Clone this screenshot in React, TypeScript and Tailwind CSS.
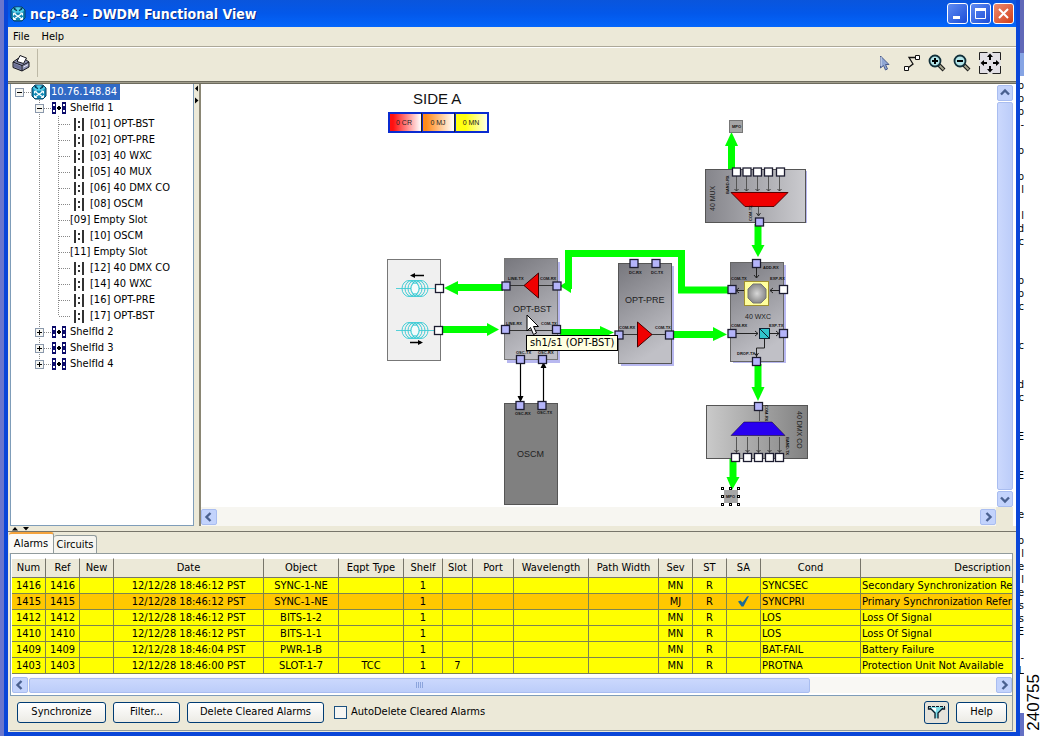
import React from "react";

/* ---------- icons ---------- */

function RouterIcon() {
  return (
    <svg width="16" height="16" viewBox="0 0 16 16" className="shrink-0" aria-hidden="true">
      <path d="M1 4 L4 1 H12 L15 4 V12 L12 15 H4 L1 12 Z" fill="#1489b4" stroke="#0a3f60" strokeWidth="1" />
      <ellipse cx="8" cy="4" rx="6" ry="2.8" fill="#4ccdea" />
      <path d="M4 3 l3 1.6 M12 3 l-3 1.6 M5.5 2.4 h-2 M10.5 2.4 h2" stroke="#063a58" strokeWidth="1.2" />
      <path d="M4 7.5 L12 13 M12 7.5 L4 13" stroke="#fff" strokeWidth="1.2" />
      <path d="M3.5 9.5 v-2.4 h2.4 M12.5 9.5 v-2.4 h-2.4 M3.5 11.2 v2.3 h2.4 M12.5 11.2 v2.3 h-2.4" stroke="#fff" fill="none" />
    </svg>
  );
}

function ShelfIcon() {
  return (
    <svg width="14" height="12" viewBox="0 0 14 12" className="shrink-0" aria-hidden="true">
      <rect x="0" y="0" width="4" height="12" fill="#0c0c6c" />
      <rect x="10" y="0" width="4" height="12" fill="#0c0c6c" />
      <path d="M1 2h2v2H1zM1 8h2v2H1zM11 2h2v2h-2zM11 8h2v2h-2z" fill="#fff" />
      <path d="M5 6h4M7 4v4" stroke="#000" strokeWidth="2" />
    </svg>
  );
}

function CardIcon() {
  return (
    <svg width="11" height="13" viewBox="0 0 11 13" className="shrink-0" aria-hidden="true">
      <path d="M2 0v13M10 0v13" stroke="#333" strokeWidth="2" />
      <path d="M5 3h2v2H5zM5 8h2v2H5z" fill="#333" />
    </svg>
  );
}

function PrinterIcon() {
  return (
    <svg width="18" height="18" viewBox="0 0 18 18" aria-hidden="true">
      <path d="M1 8 L6 4.5 H12 L17 8 V13 L10 17 L1 13.5 Z" fill="#8f93b4" stroke="#16161e" />
      <path d="M1 8 L10 11.5 L17 8 M10 11.5 V17" stroke="#16161e" fill="none" />
      <path d="M5 7.5 L8 1.5 L14.5 4 L11.5 9.5 Z" fill="#fff" stroke="#16161e" />
      <path d="M2 9.5 L9 12.5 V15.5 L2 12.8 Z" fill="#6a6e94" />
      <path d="M11.5 13 l4.5 -2.3" stroke="#e8e8f4" />
    </svg>
  );
}

function Magnifier({ plus }: { plus?: boolean }) {
  return (
    <svg width="18" height="18" viewBox="0 0 18 18" aria-hidden="true">
      <path d="M11 11 L16 16" stroke="#1a1a1a" strokeWidth="4" />
      <path d="M11.5 11.5 L15.5 15.5" stroke="#a8a890" strokeWidth="1.8" />
      <circle cx="7" cy="7" r="5.5" fill="#b4e6ea" stroke="#12303a" strokeWidth="1.8" />
      <path d={plus ? "M4 7h6M7 4v6" : "M4 7h6"} stroke="#000" strokeWidth="2" />
    </svg>
  );
}

function Chevron({ dir }: { dir: "up" | "down" | "left" | "right" }) {
  const paths = {
    up: "M1 6.5 L5 2.5 L9 6.5",
    down: "M1 3.5 L5 7.5 L9 3.5",
    left: "M6.5 1 L2.5 5 L6.5 9",
    right: "M3.5 1 L7.5 5 L3.5 9",
  };
  return (
    <svg width="10" height="10" viewBox="0 0 10 10" aria-hidden="true">
      <path d={paths[dir]} fill="none" stroke="#4a6190" strokeWidth="2.4" />
    </svg>
  );
}

function ScrollButton({ dir }: { dir: "up" | "down" | "left" | "right" }) {
  return (
    <button
      aria-label={`Scroll ${dir}`}
      className="flex size-4 shrink-0 items-center justify-center rounded-xs border border-[#a9bdf0] bg-[#c3d3fc]"
    >
      <Chevron dir={dir} />
    </button>
  );
}

/* ---------- title bar, menu, toolbar ---------- */

function TitleBar() {
  const btn = "flex size-[21px] items-center justify-center rounded-[3px] border border-white";
  return (
    <header className="flex h-[27px] shrink-0 items-center gap-1 bg-linear-to-b from-[#0a55dc] via-[#0358ea] to-[#0466fb] pr-[2px] pl-[2px]">
      <RouterIcon />
      <h1 className="flex-1 font-['DejaVu_Sans_Condensed',sans-serif] text-[14px] leading-5 font-bold text-white [text-shadow:1px_1px_#0a2a80]">
        ncp-84 - DWDM Functional View
      </h1>
      <div className="flex gap-[2px]">
        <button aria-label="Minimize" className={`${btn} bg-linear-to-br from-[#5f8bf2] to-[#1c4bd6]`}>
          <svg width="13" height="13" aria-hidden="true"><path d="M2 9h7v3H2z" fill="#fff" /></svg>
        </button>
        <button aria-label="Maximize" className={`${btn} bg-linear-to-br from-[#5f8bf2] to-[#1c4bd6]`}>
          <svg width="13" height="13" aria-hidden="true"><path d="M1.5 2h10v9.5h-10z" fill="none" stroke="#fff" /><path d="M1 1h11v3H1z" fill="#fff" /></svg>
        </button>
        <button aria-label="Close" className={`${btn} bg-linear-to-br from-[#ee8a6c] to-[#d03c12]`}>
          <svg width="13" height="13" aria-hidden="true"><path d="M2 2l9 9M11 2l-9 9" stroke="#fff" strokeWidth="2" /></svg>
        </button>
      </div>
    </header>
  );
}

function Toolbar() {
  return (
    <div className="flex h-[34px] shrink-0 items-center border-t border-white pr-[14px] pb-[3px] pl-1">
      <button aria-label="Print" className="size-[18px]"><PrinterIcon /></button>
      <div className="ml-[7px] h-7 w-px bg-[#bdb9a6]" />
      <div className="flex-1" />
      <div className="flex items-center gap-[7px]">
        <button aria-label="Select" className="mr-[2px] size-[18px]">
          <svg width="18" height="18" viewBox="0 0 18 18" aria-hidden="true">
            <path d="M4.500 2 V14 L7.500 11.500 L9.500 16 L11.500 15 L9.500 10.500 L13 10.500 Z" fill="#8fa6d4" stroke="#4a5c8c" />
            <path d="M5 3v9" stroke="#d8e2f6" />
          </svg>
        </button>
        <button aria-label="Connect" className="size-[18px]">
          <svg width="18" height="18" viewBox="0 0 18 18" aria-hidden="true">
            <path d="M1.500 12.500h4v4h-4zM12.500 1.500h4v4h-4z" fill="#fff" stroke="#111" />
            <path d="M12 3.500 H6 L10 10 L5.500 13.500" fill="none" stroke="#111" strokeWidth="1.300" />
          </svg>
        </button>
        <button aria-label="Zoom in" className="size-[18px]"><Magnifier plus /></button>
        <button aria-label="Zoom out" className="size-[18px]"><Magnifier /></button>
        <button aria-label="Fit to window" className="size-6">
          <svg width="24" height="24" viewBox="0 0 24 24" aria-hidden="true">
            <path d="M1.500 1.500h21v21h-21z" fill="#e2e0e6" />
            <path d="M1.500 9v-7.500h8M14.500 1.500h8V9M22.500 15v7.500h-8M9.500 22.500h-8V15" fill="none" stroke="#222" />
            <path d="M12 5v4M12 15v4M5 12h4M15 12h4" stroke="#000" strokeWidth="2" />
            <path d="M12 2.500l3 3.500h-6zM12 21.500l3-3.500h-6zM2.500 12l3.500-3v6zM21.500 12l-3.500-3v6z" fill="#000" />
          </svg>
        </button>
      </div>
    </div>
  );
}

/* ---------- navigation tree ---------- */

function Expander({ x, open }: { x: number; open?: boolean }) {
  return (
    <g>
      <rect x={x + 0.5} y="4.5" width="8" height="8" fill="#f6f6f2" stroke="#8a98ac" />
      <path d={open ? `M${x + 2} 8.5h5` : `M${x + 2} 8.5h5M${x + 4.5} 6v5`} stroke="#000" />
    </g>
  );
}

const dots = { stroke: "#888", strokeDasharray: "1 1" };

const slots = [
  "[01] OPT-BST", "[02] OPT-PRE", "[03] 40 WXC", "[05] 40 MUX", "[06] 40 DMX CO", "[08] OSCM",
  "[09] Empty Slot", "[10] OSCM", "[11] Empty Slot", "[12] 40 DMX CO", "[14] 40 WXC",
  "[16] OPT-PRE", "[17] OPT-BST",
];

function ShelfRow({ id, open, last }: { id: number; open?: boolean; last?: boolean }) {
  return (
    <div className="flex h-4 items-center">
      <svg width="41" height="16" className="shrink-0" aria-hidden="true">
        <path d={last ? "M28.500 0v8" : "M28.500 0v16"} {...dots} />
        <path d="M33 8.500h7" {...dots} />
        <Expander x={24} open={open} />
      </svg>
      <ShelfIcon />
      <span className="pl-1">ShelfId {id}</span>
    </div>
  );
}

function Tree() {
  return (
    <nav className="w-[184px] shrink-0 overflow-hidden border-r border-b border-l border-[#7f9db9] bg-white leading-4 whitespace-nowrap">
      <div className="flex h-4 items-center">
        <svg width="20" height="16" className="shrink-0" aria-hidden="true">
          <path d="M13 8.500h7" {...dots} />
          <Expander x={4} open />
        </svg>
        <RouterIcon />
        <span className="ml-[3px] bg-[#316ac5] pr-[3px] pl-px text-white">10.76.148.84</span>
      </div>
      <ShelfRow id={1} open />
      {slots.map((slot, i) => {
        const empty = slot.includes("Empty");
        return (
          <div key={slot} className="flex h-4 items-center">
            <svg width={empty ? 59 : 62} height="16" className="shrink-0" aria-hidden="true">
              <path d="M28.500 0v16" {...dots} />
              <path d={i === slots.length - 1 ? "M47.500 0v8" : "M47.500 0v16"} {...dots} />
              <path d="M48 8.500h11" {...dots} />
            </svg>
            {!empty && <CardIcon />}
            <span className={empty ? "" : "pl-[6px]"}>{slot}</span>
          </div>
        );
      })}
      <ShelfRow id={2} />
      <ShelfRow id={3} />
      <ShelfRow id={4} last />
    </nav>
  );
}

/* ---------- functional diagram ---------- */

function Port({ x, y, free }: { x: number; y: number; free?: boolean }) {
  return <rect x={x - 4} y={y - 4} width="8" height="8" fill={free ? "#fff" : "#b4b4fa"} stroke="#1c1c30" strokeWidth="1.3" />;
}

function Arrow({ points, head }: { points: string; head: string }) {
  return (
    <g>
      <polyline points={points} fill="none" stroke="#00ff00" strokeWidth="7" />
      <polygon points={head} fill="#00ff00" />
    </g>
  );
}

function Tiny({ x, y, children, rotate }: { x: number; y: number; children: string; rotate?: number }) {
  return (
    <text x={x} y={y} fontSize="4" fontWeight="bold" fill="#111" transform={rotate ? `rotate(${rotate} ${x} ${y})` : undefined}>
      {children}
    </text>
  );
}

function Fiber({ y }: { y: number }) {
  return (
    <g fill="none" stroke="#2fc8d2" strokeWidth="0.9">
      <path d={`M396 ${y}h40`} strokeWidth="0.8" />
      {[409, 412, 415, 418, 421].map((cx) => (
        <ellipse key={cx} cx={cx} cy={y} rx="7" ry="8" />
      ))}
      <ellipse cx="415" cy={y} rx="4" ry="5.500" fill="#f4fbfb" />
    </g>
  );
}

function Diagram() {
  return (
    <svg
      width="795"
      height="423"
      viewBox="201 84 795 423"
      className="block font-['Liberation_Sans',sans-serif]"
      role="img"
      aria-label="Side A functional view"
    >
      <defs>
        <linearGradient id="card" x1="0" y1="0" x2="0.35" y2="1">
          <stop offset="0" stopColor="#77777d" />
          <stop offset="1" stopColor="#c0c0c6" />
        </linearGradient>
        <linearGradient id="mux" x1="0" y1="0" x2="1" y2="0">
          <stop offset="0" stopColor="#85858b" />
          <stop offset="1" stopColor="#cbcbcf" />
        </linearGradient>
        <linearGradient id="dmx" x1="0" y1="0" x2="1" y2="0">
          <stop offset="0" stopColor="#cacaca" />
          <stop offset="1" stopColor="#818181" />
        </linearGradient>
        <linearGradient id="cr"><stop offset="0.1" stopColor="#ff1010" /><stop offset="1" stopColor="#fff" /></linearGradient>
        <linearGradient id="mj"><stop offset="0.1" stopColor="#ff8a1a" /><stop offset="1" stopColor="#fff" /></linearGradient>
        <linearGradient id="mn"><stop offset="0.3" stopColor="#ffff10" /><stop offset="1" stopColor="#ffffe8" /></linearGradient>
        <radialGradient id="lens"><stop offset="0" stopColor="#d8d8d8" /><stop offset="1" stopColor="#8b8b8b" /></radialGradient>
      </defs>

      <text x="413" y="104" fontSize="15" fill="#111">SIDE A</text>
      <rect x="388" y="112" width="101" height="21" fill="#0a2bd0" />
      <g fontSize="7" fill="#222" textAnchor="middle">
        <rect x="390" y="114" width="31" height="17" fill="url(#cr)" />
        <rect x="423" y="114" width="31" height="17" fill="url(#mj)" />
        <rect x="456" y="114" width="31" height="17" fill="url(#mn)" />
        <path d="M421.500 113v19M454.500 113v19" stroke="#222" />
        <text x="404" y="125">0 CR</text>
        <text x="438" y="125">0 MJ</text>
        <text x="471" y="125">0 MN</text>
      </g>

      {/* fibre span */}
      <rect x="387.500" y="259.500" width="53" height="101" fill="#f0f0f0" stroke="#777" />
      <Fiber y={288.5} />
      <Fiber y={330.5} />
      <path d="M413 275.500h11M410 342.500h11" stroke="#000" strokeWidth="1.500" />
      <path d="M410 275.500l5-2.500v5zM423 342.500l-5-2.500v5z" fill="#000" />
      <Arrow points="503,287.500 457,287.500" head="444,288 458,281 458,295" />
      <Arrow points="442,329.500 488,329.500" head="499,329.500 487,323 487,336" />
      <Port x={439.5} y={288.5} free />
      <Port x={438.5} y={330.5} free />

      {/* green paths between cards */}
      <Arrow points="730,290 681.500,290 681.500,253.500 568.500,253.500 568.500,289" head="560,286 571,279 571,293" />
      <Arrow points="559,332.500 601,332.500" head="614,332.500 600,326 600,339" />
      <Arrow points="672,334.500 714,334.500" head="727,334.500 713,327 713,341" />
      <Arrow points="731.500,169 731.500,145" head="731.500,132 725,146 738,146" />
      <Arrow points="758,224 758,246" head="758,257 751.500,245 764.500,245" />
      <Arrow points="758,364 758,388" head="758,401 751.500,387 764.500,387" />
      <Arrow points="733,459 733,478" head="732,490 726.500,477 739.500,477" />

      {/* booster */}
      <rect x="507" y="262" width="53" height="101" fill="#b8b8f0" />
      <rect x="504.500" y="258.500" width="53" height="101" fill="url(#card)" stroke="#777" />
      <path d="M510 285.500h44M510 330.500h44" stroke="#333" />
      <polygon points="524,285.500 538.500,273 538.500,298" fill="#f00000" stroke="#400" />
      <text x="513" y="312" fontSize="9" fill="#222">OPT-BST</text>
      <Tiny x={508} y={280}>LINE-TX</Tiny>
      <Tiny x={540} y={280}>COM-RX</Tiny>
      <Tiny x={506} y={325}>LINE-RX</Tiny>
      <Tiny x={541} y={325}>COM-TX</Tiny>
      <Tiny x={516} y={354}>OSC-TX</Tiny>
      <Tiny x={538} y={354}>OSC-RX</Tiny>
      <Port x={506} y={286} />
      <Port x={557} y={286} />
      <Port x={505.500} y={329.500} />
      <Port x={556.500} y={329.500} />
      <path d="M520.500 362v38M543.500 366v36" stroke="#000" strokeWidth="1.200" />
      <path d="M520.500 402l-3-6h6zM543.500 362l-3 6h6z" fill="#000" />
      <Port x={520.500} y={359.500} />
      <Port x={542.500} y={359.500} />

      {/* supervisory channel module */}
      <rect x="504.500" y="403.500" width="53" height="101" fill="#808080" stroke="#555" />
      <text x="517" y="457" fontSize="9" fill="#222">OSCM</text>
      <Tiny x={515} y={415}>OSC-RX</Tiny>
      <Tiny x={537} y={414}>OSC-TX</Tiny>
      <Port x={520} y={405.500} />
      <Port x={542} y={405.500} />

      {/* preamplifier */}
      <rect x="621" y="266" width="53" height="100" fill="#b8b8f0" />
      <rect x="618.500" y="263.500" width="53" height="100" fill="url(#card)" stroke="#555" />
      <path d="M623 334.500h44" stroke="#333" />
      <polygon points="637.500,322 637.500,347 652,334.500" fill="#f00000" stroke="#400" />
      <text x="625" y="303" fontSize="9" fill="#222">OPT-PRE</text>
      <Tiny x={629} y={274}>DC-RX</Tiny>
      <Tiny x={651} y={274}>DC-TX</Tiny>
      <Tiny x={619} y={329}>COM-RX</Tiny>
      <Tiny x={655} y={329}>COM-TX</Tiny>
      <Port x={634} y={263.500} />
      <Port x={656} y={263.500} />
      <Port x={619} y={335} />
      <Port x={669.500} y={335} />

      {/* wavelength cross-connect */}
      <rect x="733" y="265" width="53" height="98" fill="#b8b8f0" />
      <rect x="730.500" y="262.500" width="53" height="99" fill="url(#card)" stroke="#666" />
      <rect x="744.500" y="281.500" width="24" height="24" fill="#ffff9c" stroke="#a09030" />
      <polygon points="753,284 761,284 766,289 766,298 761,303 753,303 748,298 748,289" fill="url(#lens)" stroke="#777" />
      <path d="M756.500 268v10M754 275l2.500 3 2.500-3M744 290.500h-8M739 288l-3 2.500 3 2.500M779 290.500h-9M773 288l-3 2.500 3 2.500M736 333.500h22M755 331l3 2.500-3 2.500M770 333.500h9M776 331l3 2.500-3 2.500M764.500 338v10h-8v9M754.500 353l2 3 2-3" fill="none" stroke="#222" />
      <rect x="759.500" y="328.500" width="10" height="10" fill="#30c4cc" stroke="#123" />
      <path d="M760 329l9 9" stroke="#123" />
      <text x="745" y="319" fontSize="7" fill="#222">40 WXC</text>
      <Tiny x={763} y={269}>ADD-RX</Tiny>
      <Tiny x={731} y={280}>COM-TX</Tiny>
      <Tiny x={770} y={280}>EXP-RX</Tiny>
      <Tiny x={731} y={327}>COM-RX</Tiny>
      <Tiny x={769} y={327}>EXP-TX</Tiny>
      <Tiny x={737} y={355}>DROP-TX</Tiny>
      <Port x={756.500} y={263.500} />
      <Port x={732} y={289.500} />
      <Port x={783.500} y={289.500} free />
      <Port x={732} y={333.500} />
      <Port x={783.500} y={333.500} />
      <Port x={756.500} y={361.500} />

      {/* multiplexer */}
      <rect x="707" y="171" width="100" height="52" fill="#b8b8f0" />
      <rect x="705.500" y="169.500" width="100" height="53" fill="url(#mux)" stroke="#555" />
      <path d="M736.500 176v15M746.500 176v15M757.500 176v15M768.500 176v15M779.500 176v15M758.500 207v9" stroke="#555" />
      <path d="M734.500 189l2 2 2-2M744.500 189l2 2 2-2M755.500 189l2 2 2-2M766.500 189l2 2 2-2M777.500 189l2 2 2-2M756.500 213l2 3 2-3" fill="none" stroke="#333" />
      <polygon points="731,192.500 788,192.500 774,206.500 745,206.500" fill="#f00000" stroke="#500" />
      <text x="715" y="211" fontSize="7" fill="#222" transform="rotate(-90 715 211)">40 MUX</text>
      <Tiny x={729} y={194} rotate={-90}>BAND-RX</Tiny>
      <Tiny x={752} y={221} rotate={-90}>COM-TX</Tiny>
      {[736.5, 747, 757.5, 768.5, 780.5].map((x) => <Port key={x} x={x} y={172} free />)}
      <Port x={759.500} y={222} />
      <rect x="729.500" y="120.500" width="13" height="12" fill="#a6a6a6" stroke="#777" />
      <Tiny x={732} y={128}>MPO</Tiny>

      {/* demultiplexer */}
      <rect x="706.500" y="405.500" width="101" height="53" fill="url(#dmx)" stroke="#555" />
      <path d="M736.500 437v16M747.500 437v16M758.500 437v16M769.500 437v16M779.500 437v16M759.500 411v10" stroke="#555" />
      <path d="M734.500 450l2 2 2-2M745.500 450l2 2 2-2M756.500 450l2 2 2-2M767.500 450l2 2 2-2M777.500 450l2 2 2-2" fill="none" stroke="#333" />
      <polygon points="731,435.500 744,422 772,422 785,435.500" fill="#2800f0" stroke="#102" strokeWidth="0.500" />
      <text x="797" y="411" fontSize="7" fill="#222" transform="rotate(90 797 411)">40 DMX CO</text>
      <Tiny x={765} y={405} rotate={90}>COM-RX</Tiny>
      <Tiny x={786} y={437} rotate={90}>BAND-TX</Tiny>
      <Port x={758.500} y={406.500} />
      {[735.5, 747.5, 758.5, 769.5, 779.5].map((x) => <Port key={x} x={x} y={457.5} free />)}
      <rect x="724" y="490" width="14" height="13" fill="#a6a6a6" />
      <Tiny x={726} y={498}>MPO</Tiny>
      {[488.5, 496.5, 504.5].map((y) =>
        [722.5, 730.5, 738.5]
          .filter((x) => !(x === 730.5 && y === 496.5))
          .map((x) => <rect key={`${x}-${y}`} x={x - 1} y={y - 1} width="2" height="2" fill="#fff" stroke="#000" />)
      )}
    </svg>
  );
}

function Canvas() {
  return (
    <section className="flex min-w-0 flex-1 flex-col border-l-2 border-[#8a8674] bg-white">
      <div className="flex min-h-0 flex-1">
        <div className="relative min-w-0 flex-1 overflow-hidden">
          <Diagram />
          <div className="absolute top-[251px] left-[325px] h-4 border border-black bg-[#ffffe1] px-[3px] leading-[14px] whitespace-nowrap">
            sh1/s1 (OPT-BST)
          </div>
          <svg className="absolute top-[230px] left-[325px]" width="14" height="22" viewBox="0 0 14 22" aria-hidden="true">
            <path d="M1 1 V17 L4.500 13.500 L7.500 20.500 L10.500 19 L7.500 12.500 H12.500 Z" fill="#fff" stroke="#000" />
          </svg>
        </div>
        <div className="mr-[3px] flex w-4 flex-col pt-px">
          <ScrollButton dir="up" />
          <div className="my-px flex-1 rounded-xs border border-[#a9bdf0] bg-linear-to-r from-[#cbd8fd] to-[#bccdf9]" />
          <ScrollButton dir="down" />
        </div>
      </div>
      <div className="mr-[3px] flex h-[19px] items-center bg-[#f7f6f1]">
        <ScrollButton dir="left" />
        <div className="flex-1" />
        <ScrollButton dir="right" />
        <div className="h-full w-[17px] bg-[#ece9d8]" />
      </div>
    </section>
  );
}

/* ---------- alarms ---------- */

const columns: { label: string; col: string }[] = [
  { label: "Num", col: "w-[34px]" },
  { label: "Ref", col: "w-[34px]" },
  { label: "New", col: "w-[34px]" },
  { label: "Date", col: "w-[150px]" },
  { label: "Object", col: "w-[75px]" },
  { label: "Eqpt Type", col: "w-[65px]" },
  { label: "Shelf", col: "w-[39px]" },
  { label: "Slot", col: "w-[30px]" },
  { label: "Port", col: "w-[41px]" },
  { label: "Wavelength", col: "w-[75px]" },
  { label: "Path Width", col: "w-[70px]" },
  { label: "Sev", col: "w-[34px]" },
  { label: "ST", col: "w-[34px]" },
  { label: "SA", col: "w-[34px]" },
  { label: "Cond", col: "w-[100px]" },
  { label: "Description", col: "w-[244px]" },
];

const alarms = [
  ["1416", "12/12/28 18:46:12 PST", "SYNC-1-NE", "", "1", "", "MN", "", "SYNCSEC", "Secondary Synchronization Reference Failure"],
  ["1415", "12/12/28 18:46:12 PST", "SYNC-1-NE", "", "1", "", "MJ", "y", "SYNCPRI", "Primary Synchronization Reference Failure"],
  ["1412", "12/12/28 18:46:12 PST", "BITS-1-2", "", "1", "", "MN", "", "LOS", "Loss Of Signal"],
  ["1410", "12/12/28 18:46:12 PST", "BITS-1-1", "", "1", "", "MN", "", "LOS", "Loss Of Signal"],
  ["1409", "12/12/28 18:46:04 PST", "PWR-1-B", "", "1", "", "MN", "", "BAT-FAIL", "Battery Failure"],
  ["1403", "12/12/28 18:46:00 PST", "SLOT-1-7", "TCC", "1", "7", "MN", "", "PROTNA", "Protection Unit Not Available"],
];

function AlarmTable() {
  const cell = "h-4 overflow-hidden border-r border-b border-[#7d8450] p-0 text-center leading-[15px]";
  return (
    <div className="overflow-hidden">
      <table className="w-[1093px] table-fixed border-separate border-spacing-0 whitespace-nowrap">
        <colgroup>
          {columns.map((c) => <col key={c.label} className={c.col} />)}
        </colgroup>
        <thead>
          <tr>
            {columns.map((c) => (
              <th key={c.label} scope="col" className="h-5 border-t border-r border-b border-t-white border-r-[#77756a] border-b-[#77756a] bg-[#ece9d8] p-0 text-center leading-[18px] font-normal">
                {c.label}
              </th>
            ))}
          </tr>
        </thead>
        <tbody>
          {alarms.map(([num, date, object, eqpt, shelf, slot, sev, sa, cond, desc]) => (
            <tr key={num} className={sev === "MJ" ? "bg-[#ffc800]" : "bg-[#ffff00]"}>
              <td className={cell}>{num}</td>
              <td className={cell}>{num}</td>
              <td className={cell} />
              <td className={cell}>{date}</td>
              <td className={cell}>{object}</td>
              <td className={cell}>{eqpt}</td>
              <td className={cell}>{shelf}</td>
              <td className={cell}>{slot}</td>
              <td className={cell} />
              <td className={cell} />
              <td className={cell} />
              <td className={cell}>{sev}</td>
              <td className={cell}>R</td>
              <td className={cell}>
                {sa && (
                  <svg width="11" height="11" viewBox="0 0 11 11" className="mx-auto" role="img" aria-label="Service affecting">
                    <path d="M0 5.500 L2.500 4.500 L4.500 6.500 L9 0.500 L11 0 L5.500 10.500 L3.500 10.500 Z" fill="#1b6c96" />
                  </svg>
                )}
              </td>
              <td className="h-4 overflow-hidden border-r border-b border-[#7d8450] p-0 pl-px text-left leading-[15px]">{cond}</td>
              <td className="h-4 overflow-hidden border-r border-b border-[#7d8450] p-0 pl-px text-left leading-[15px]">{desc}</td>
            </tr>
          ))}
        </tbody>
      </table>
    </div>
  );
}

function AlarmPanel() {
  const btn = "h-[21px] rounded-[3px] border border-[#003c74] bg-linear-to-b from-white to-[#ecebe5]";
  return (
    <section className="flex shrink-0 flex-col pl-px">
      <div role="tablist" className="flex h-[21px] items-end">
        <button role="tab" aria-selected="true" className="h-[21px] w-[45px] rounded-t-[3px] border-t-2 border-r border-t-[#f5a33c] border-r-[#919b9c] bg-[#fbfaf7] leading-4">
          Alarms
        </button>
        <button role="tab" aria-selected="false" className="h-[18px] w-[43px] rounded-t-[3px] border-t border-r border-[#919b9c] bg-[#f6f5ef] leading-4">
          Circuits
        </button>
      </div>
      <div className="mr-[3px] ml-px border-t border-r border-b border-[#919b9c]">
        <div className="border-b border-l border-[#7f9db9] bg-white pt-1 pl-px">
          <AlarmTable />
          <div className="mt-[3px] mb-[2px] flex h-4 items-center gap-px bg-[#f9f8f4]">
            <ScrollButton dir="left" />
            <div className="flex h-[15px] w-[781px] items-center justify-center gap-px rounded-xs border border-[#a9bdf0] bg-linear-to-b from-[#cbd8fd] to-[#bccdf9]">
              {[0, 1, 2, 3].map((i) => <span key={i} className="h-[6px] w-px bg-[#8ca4dc]" />)}
            </div>
            <div className="flex-1" />
            <ScrollButton dir="right" />
          </div>
        </div>
        <div className="flex h-[34px] items-center pr-[5px] pb-px pl-[7px]">
          <button className={`${btn} w-[89px]`}>Synchronize</button>
          <button className={`${btn} ml-[7px] w-[67px]`}>Filter...</button>
          <button className={`${btn} ml-[7px] w-[137px]`}>Delete Cleared Alarms</button>
          <label className="ml-[10px] flex items-center gap-1">
            <input type="checkbox" className="size-[13px] appearance-none border border-[#1c5180] bg-[#f6f6f3]" />
            AutoDelete Cleared Alarms
          </label>
          <div className="flex-1" />
          <button aria-label="Filter alarms" className="flex h-[23px] w-[25px] items-center justify-center rounded-[3px] border border-[#003c74] bg-[#e4e2da]">
            <svg width="19" height="15" viewBox="0 0 19 15" aria-hidden="true">
              <path d="M2 2 H17 L11 8 V13 H8 V8 Z" fill="#7fdde8" />
              <path d="M4 3h5v4z" fill="#fff" />
              <path d="M1 1.500h17" stroke="#0a1a2a" strokeDasharray="3 1" />
              <path d="M1.500 2v2h2M17.500 2v2h-2M3 3l5 5v5.500M16 3l-5 5v5.500" fill="none" stroke="#0a1a2a" strokeWidth="1.300" />
            </svg>
          </button>
          <button className={`${btn} ml-[7px] w-[51px]`}>Help</button>
        </div>
      </div>
    </section>
  );
}

/* ---------- document visible behind the window's right edge ---------- */

const edge = "ppp- p pl ldc  ppc  c  dc  E  E  e plelessE -L".split("");

function BackgroundEdge() {
  return (
    <div className="flex w-1 shrink-0 flex-col overflow-hidden" aria-hidden="true">
      <div className="h-[53px] shrink-0 bg-[#6068b8]" />
      <div className="h-[23px] shrink-0 bg-[#86a4e4]" />
      <div className="flex flex-1 flex-col pt-[3px]">
        {edge.map((letter, i) => (
          <div key={i} className="flex h-[13px] justify-end leading-[13px]">{letter}</div>
        ))}
      </div>
      <div className="h-[23px] shrink-0 bg-[#6470c4]" />
    </div>
  );
}

/* ---------- page ---------- */

export default function App() {
  return (
    <div className="flex min-h-screen w-full overflow-hidden bg-white font-['DejaVu_Sans_Condensed','Noto_Sans',sans-serif] text-[11px] text-black">
      <div className="w-1 shrink-0 bg-[#6a76cc]" />
      <main className="flex min-w-0 flex-1 flex-col border-r-4 border-b-4 border-l-4 border-[#0a46d8] bg-[#ece9d8]">
        <TitleBar />
        <div role="menubar" className="flex h-[19px] shrink-0 items-center gap-3 px-[5px] pt-px">
          <button role="menuitem">File</button>
          <button role="menuitem">Help</button>
        </div>
        <div className="h-px shrink-0 bg-[#aca899]" />
        <Toolbar />
        <div className="h-[3px] shrink-0 border-y border-[#6e6c5e] bg-[#a09d8c]" />
        <div className="flex min-h-0 flex-1 pl-[2px]">
          <Tree />
          <div className="w-[5px] shrink-0">
            <svg width="5" height="22" aria-hidden="true">
              <path d="M4 1.500v6L1 4.500zM1 13.500v6L4.500 16.500z" fill="#000" />
            </svg>
          </div>
          <Canvas />
        </div>
        <div className="flex h-[6px] shrink-0 items-start border-b border-[#77756a]">
          <svg width="24" height="5" className="ml-1" aria-hidden="true">
            <path d="M0 4.500h6L3 1zM11 1h6l-3 3.500z" fill="#000" />
          </svg>
        </div>
        <AlarmPanel />
        <div className="h-px shrink-0" />
      </main>
      <aside className="flex w-[24px] shrink-0">
        <BackgroundEdge />
        <div className="flex flex-1 items-end justify-center pb-[5px]">
          <span className="rotate-180 font-['Liberation_Sans',sans-serif] text-[17px] leading-[18px] [writing-mode:vertical-rl]">240755</span>
        </div>
      </aside>
    </div>
  );
}
